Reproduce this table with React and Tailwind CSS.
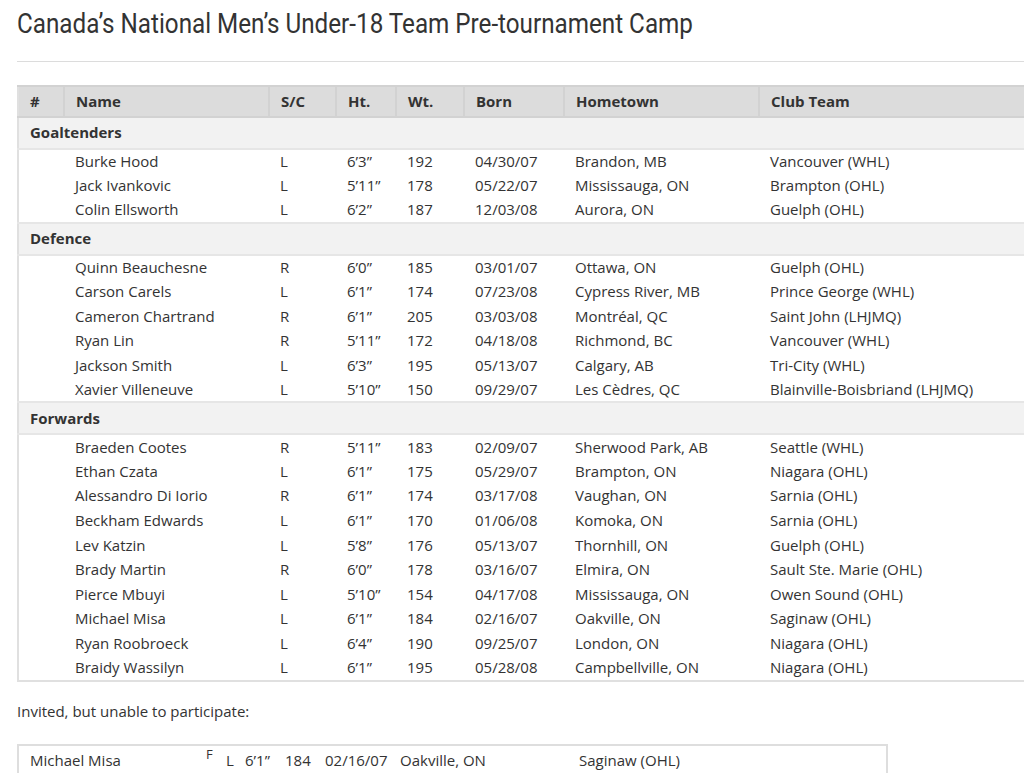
const roster = [
  {
    group: 'Goaltenders',
    players: [
      ['Burke Hood', 'L', '6\u20193\u201D', '192', '04/30/07', 'Brandon, MB', 'Vancouver (WHL)'],
      ['Jack Ivankovic', 'L', '5\u201911\u201D', '178', '05/22/07', 'Mississauga, ON', 'Brampton (OHL)'],
      ['Colin Ellsworth', 'L', '6\u20192\u201D', '187', '12/03/08', 'Aurora, ON', 'Guelph (OHL)'],
    ],
  },
  {
    group: 'Defence',
    players: [
      ['Quinn Beauchesne', 'R', '6\u20190\u201D', '185', '03/01/07', 'Ottawa, ON', 'Guelph (OHL)'],
      ['Carson Carels', 'L', '6\u20191\u201D', '174', '07/23/08', 'Cypress River, MB', 'Prince George (WHL)'],
      ['Cameron Chartrand', 'R', '6\u20191\u201D', '205', '03/03/08', 'Montréal, QC', 'Saint John (LHJMQ)'],
      ['Ryan Lin', 'R', '5\u201911\u201D', '172', '04/18/08', 'Richmond, BC', 'Vancouver (WHL)'],
      ['Jackson Smith', 'L', '6\u20193\u201D', '195', '05/13/07', 'Calgary, AB', 'Tri-City (WHL)'],
      ['Xavier Villeneuve', 'L', '5\u201910\u201D', '150', '09/29/07', 'Les Cèdres, QC', 'Blainville-Boisbriand (LHJMQ)'],
    ],
  },
  {
    group: 'Forwards',
    players: [
      ['Braeden Cootes', 'R', '5\u201911\u201D', '183', '02/09/07', 'Sherwood Park, AB', 'Seattle (WHL)'],
      ['Ethan Czata', 'L', '6\u20191\u201D', '175', '05/29/07', 'Brampton, ON', 'Niagara (OHL)'],
      ['Alessandro Di Iorio', 'R', '6\u20191\u201D', '174', '03/17/08', 'Vaughan, ON', 'Sarnia (OHL)'],
      ['Beckham Edwards', 'L', '6\u20191\u201D', '170', '01/06/08', 'Komoka, ON', 'Sarnia (OHL)'],
      ['Lev Katzin', 'L', '5\u20198\u201D', '176', '05/13/07', 'Thornhill, ON', 'Guelph (OHL)'],
      ['Brady Martin', 'R', '6\u20190\u201D', '178', '03/16/07', 'Elmira, ON', 'Sault Ste. Marie (OHL)'],
      ['Pierce Mbuyi', 'L', '5\u201910\u201D', '154', '04/17/08', 'Mississauga, ON', 'Owen Sound (OHL)'],
      ['Michael Misa', 'L', '6\u20191\u201D', '184', '02/16/07', 'Oakville, ON', 'Saginaw (OHL)'],
      ['Ryan Roobroeck', 'L', '6\u20194\u201D', '190', '09/25/07', 'London, ON', 'Niagara (OHL)'],
      ['Braidy Wassilyn', 'L', '6\u20191\u201D', '195', '05/28/08', 'Campbellville, ON', 'Niagara (OHL)'],
    ],
  },
];

const headers = ['#', 'Name', 'S/C', 'Ht.', 'Wt.', 'Born', 'Hometown', 'Club Team'];

const App = () => {
  return (
    <div className="min-h-screen overflow-hidden bg-white pl-[17px] text-[15px] text-[#333] [font-family:'Open_Sans',sans-serif]">
      <h1 className="origin-left scale-x-[0.865] whitespace-nowrap pt-[6px] text-[28px] leading-[36px] text-[#333] [font-family:Roboto,sans-serif]">
        Canada’s National Men’s Under-18 Team Pre-tournament Camp
      </h1>
      <hr className="mt-[19px] border-t border-[#dcdcdc]" />

      <table className="mt-[23px] w-full table-fixed border-collapse border-l-2 border-[#e0e0e0]">
        <colgroup>
          <col className="w-[46px]" />
          <col className="w-[205px]" />
          <col className="w-[67px]" />
          <col className="w-[60px]" />
          <col className="w-[68px]" />
          <col className="w-[100px]" />
          <col className="w-[195px]" />
          <col />
        </colgroup>
        <thead>
          <tr className="h-[31px] border-y-2 border-[#d2d2d2] bg-[#dcdcdc]">
            {headers.map((h) => (
              <th
                key={h}
                className="border-l-2 border-[#d2d2d2] px-[11px] text-left font-bold first:border-l-0"
              >
                {h}
              </th>
            ))}
          </tr>
        </thead>
        {roster.map((section) => (
          <tbody key={section.group}>
            <tr className="h-[32px] border-y-2 border-[#e6e6e6] bg-[#f2f2f2]">
              <td colSpan={8} className="px-[11px] pb-[1px] font-bold">
                {section.group}
              </td>
            </tr>
            {section.players.map((p) => (
              <tr key={p[0]} className="h-[24.6px] leading-[20px]">
                <td className="px-[11px]" />
                {p.map((v, i) => (
                  <td key={i} className="whitespace-nowrap px-[11px] pb-[1px]">
                    {v}
                  </td>
                ))}
              </tr>
            ))}
          </tbody>
        ))}
      </table>
      <div className="border-b-2 border-[#e0e0e0]" />

      <p className="mt-[18px] leading-[22px]">Invited, but unable to participate:</p>

      <div className="mt-[22px] w-[871px] border-2 border-[#dedede]">
        <div className="flex h-[30px] items-center whitespace-nowrap pb-[2px] pl-[11px]">
          <span className="w-[176px]">Michael Misa</span>
          <span className="relative -top-[6px] w-[20px] text-[13px]">F</span>
          <span className="w-[19px]">L</span>
          <span className="w-[40px]">6’1”</span>
          <span className="w-[40px]">184</span>
          <span className="w-[75px]">02/16/07</span>
          <span className="w-[179px]">Oakville, ON</span>
          <span>Saginaw (OHL)</span>
        </div>
      </div>
      <div className="h-[40px]" />
    </div>
  );
};

export default App;
